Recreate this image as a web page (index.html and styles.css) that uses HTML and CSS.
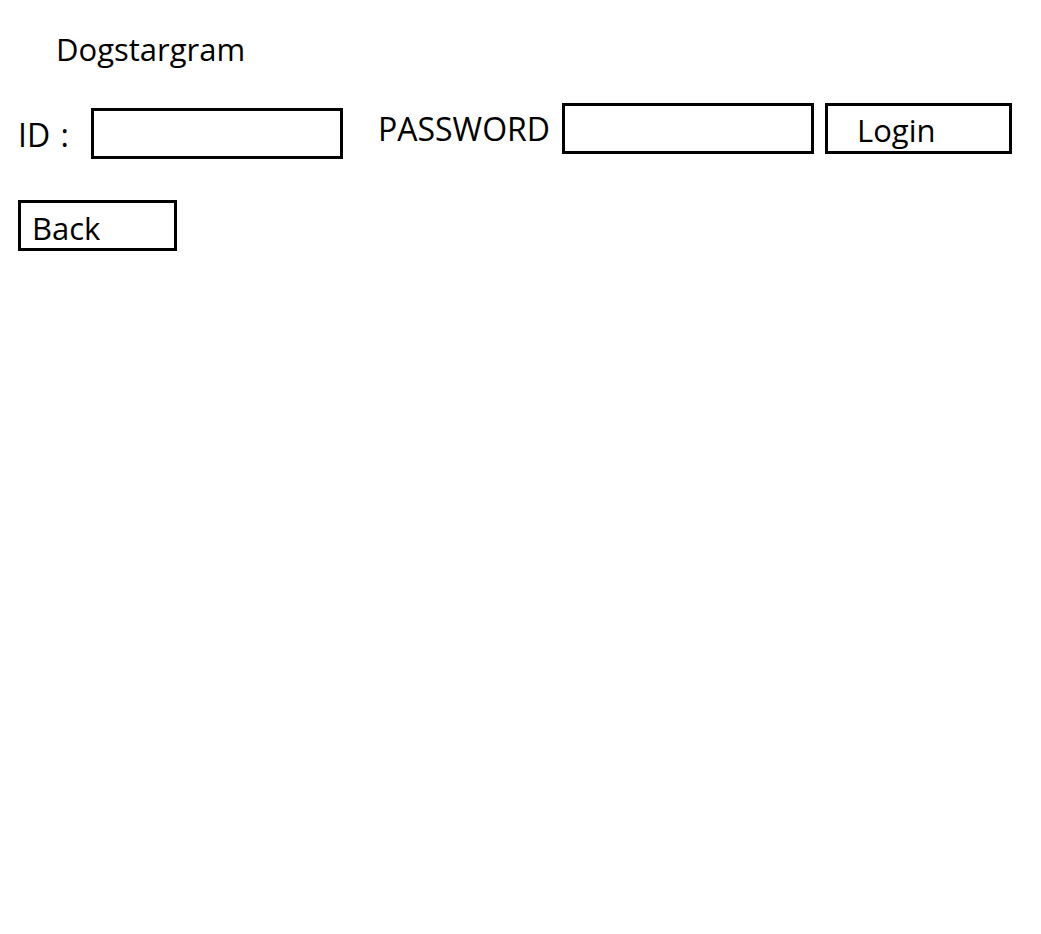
FILE: index.html
```html
<!DOCTYPE html>
<html>
<head>
<meta charset="utf-8">
<title>Dogstargram</title>
<link rel="stylesheet" href="styles.css">
</head>
<body>
<div class="page">
  <div class="brand">Dogstargram</div>
  <form class="login-row">
    <label class="label label-id" for="uid">ID :</label>
    <input class="field field-id" id="uid" type="text">
    <label class="label label-pw" for="pw">PASSWORD</label>
    <input class="field field-pw" id="pw" type="password">
    <button class="btn btn-login" type="button">Login</button>
  </form>
  <button class="btn btn-back" type="button">Back</button>
</div>
</body>
</html>
```

FILE: styles.css
```css
html, body {
  margin: 0;
  padding: 0;
  background: #fff;
}
body {
  font-family: "Open Sans", "Noto Sans", sans-serif;
  color: #000;
}
.page {
  padding: 30px 0 0 18px;
  display: flex;
  flex-direction: column;
  align-items: flex-start;
}
.brand {
  margin-left: 38px;
  font-size: 31px;
  line-height: 38px;
  height: 38px;
}
.login-row {
  margin-top: 35px;
  display: flex;
  align-items: flex-start;
  margin-bottom: 0;
}
.label {
  font-size: 32px;
  line-height: 40px;
}
.label-id {
  margin-top: 12px;
  width: 73px;
  word-spacing: 2px;
}
.label-pw {
  margin-left: 35px;
  margin-top: 6px;
  width: 184px;
}
.field {
  box-sizing: border-box;
  width: 252px;
  height: 51px;
  border: 3px solid #000;
  border-radius: 0;
  background: #fff;
  padding: 0 6px;
  font: inherit;
  font-size: 20px;
  outline: none;
  margin: 0;
}
.field-id {
  margin-top: 5px;
}
.btn {
  box-sizing: border-box;
  height: 51px;
  border: 3px solid #000;
  border-radius: 0;
  background: #fff;
  font-family: inherit;
  font-size: 31px;
  line-height: 40px;
  color: #000;
  text-align: left;
  margin: 0;
  cursor: pointer;
}
.btn-login {
  margin-left: 11px;
  width: 187px;
  padding: 2px 0 0 29px;
}
.btn-back {
  margin-top: 41px;
  width: 159px;
  padding: 4px 0 0 11px;
}
```
